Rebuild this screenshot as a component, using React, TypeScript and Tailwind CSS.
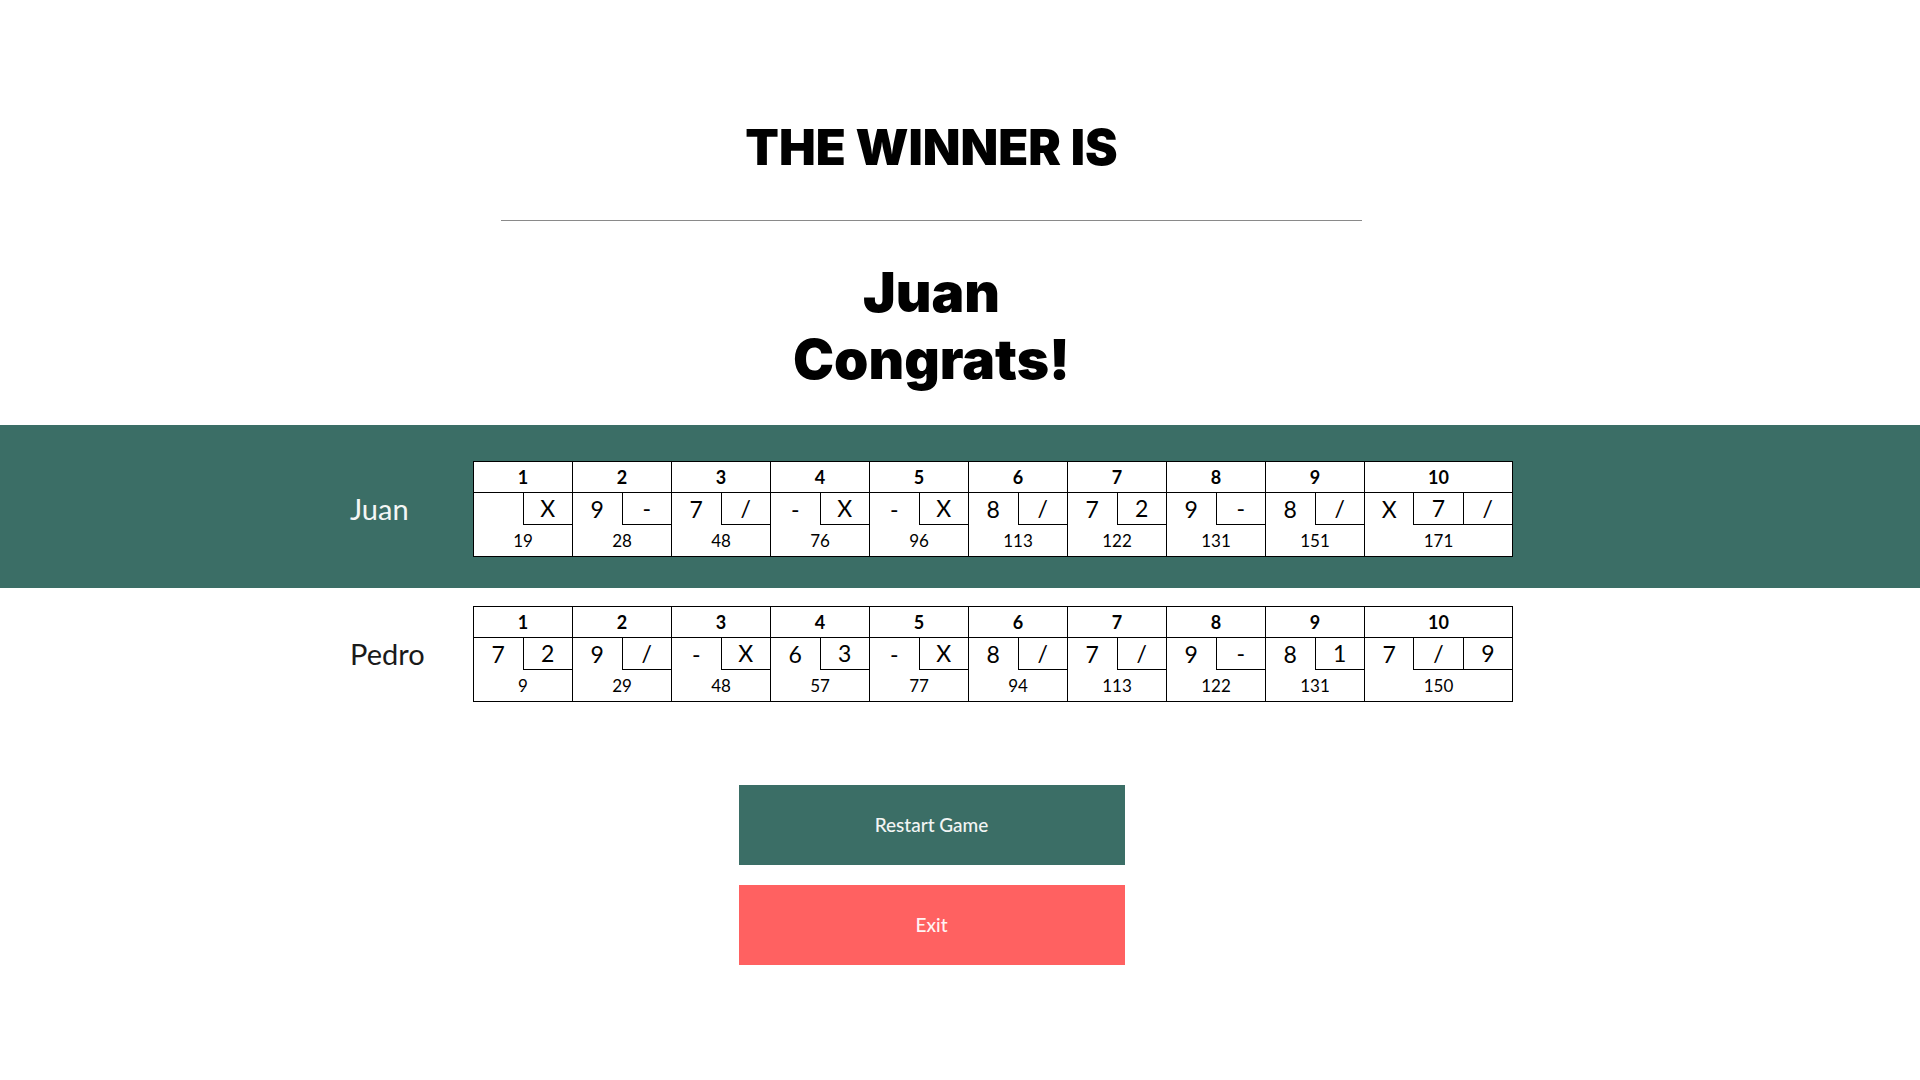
import React from 'react';

type Player = {
  name: string;
  rolls: string[][];
  scores: number[];
};

const players: Player[] = [
  {
    name: 'Juan',
    rolls: [['', 'X'], ['9', '-'], ['7', '/'], ['-', 'X'], ['-', 'X'], ['8', '/'], ['7', '2'], ['9', '-'], ['8', '/'], ['X', '7', '/']],
    scores: [19, 28, 48, 76, 96, 113, 122, 131, 151, 171],
  },
  {
    name: 'Pedro',
    rolls: [['7', '2'], ['9', '/'], ['-', 'X'], ['6', '3'], ['-', 'X'], ['8', '/'], ['7', '/'], ['9', '-'], ['8', '1'], ['7', '/', '9']],
    scores: [9, 29, 48, 57, 77, 94, 113, 122, 131, 150],
  },
];

const winner = 'Juan';

const Frame: React.FC<{ index: number; rolls: string[]; score: number }> = ({ index, rolls, score }) => {
  const last = index === 9;
  return (
    <div className={`flex flex-col ${last ? 'w-[147px]' : 'w-[99px] border-r border-black'}`}>
      <div className="h-[31px] border-b border-black flex items-center justify-center text-[18px] font-bold">
        {index + 1}
      </div>
      <div className="h-[32px] flex">
        {rolls.map((r, i) => (
          <div
            key={i}
            className={`flex-1 flex items-center justify-center text-[23px] ${i > 0 ? 'border-l border-b border-black' : ''}`}
          >
            {r}
          </div>
        ))}
      </div>
      <div className="h-[31px] flex items-center justify-center text-[17px]">{score}</div>
    </div>
  );
};

const ScoreRow: React.FC<{ player: Player; highlight: boolean }> = ({ player, highlight }) => (
  <div className={`flex items-center pl-[350px] ${highlight ? 'bg-[#3b6e66] pt-[36px] pb-[31px] text-[#f4f6f5]' : 'pt-[18px] text-[#1a1a1a]'}`}>
    <div className="w-[123px] text-[29px]">{player.name}</div>
    <div className="flex bg-white text-black border border-black">
      {player.rolls.map((rolls, i) => (
        <Frame key={i} index={i} rolls={rolls} score={player.scores[i]} />
      ))}
    </div>
  </div>
);

export default function App() {
  return (
    <div className="w-full min-h-screen bg-white text-black" style={{ fontFamily: 'Lato, "Open Sans", sans-serif' }}>
      <div className="w-[1863px] flex flex-col items-center pt-[123px]" style={{ fontFamily: 'Inter, Lato, sans-serif' }}>
        <h1 className="text-[49px] leading-none font-black">THE WINNER IS</h1>
        <div className="w-[861px] h-px bg-[#8a8a8a] mt-[48px]" />
        <div className="mt-[38px] text-[55px] leading-[67px] font-black text-center">
          <div>{winner}</div>
          <div>Congrats!</div>
        </div>
      </div>

      <div className="mt-[32px]">
        {players.map(p => (
          <ScoreRow key={p.name} player={p} highlight={p.name === winner} />
        ))}
      </div>

      <div className="w-[1863px] flex flex-col items-center gap-[20px] mt-[83px]">
        <button className="w-[386px] h-[80px] bg-[#3b6e66] text-[#f2f5f4] text-[19px] font-medium">
          Restart Game
        </button>
        <button className="w-[386px] h-[80px] bg-[#ff6161] text-[#fff4f4] text-[19px] font-medium">
          Exit
        </button>
      </div>
    </div>
  );
}
